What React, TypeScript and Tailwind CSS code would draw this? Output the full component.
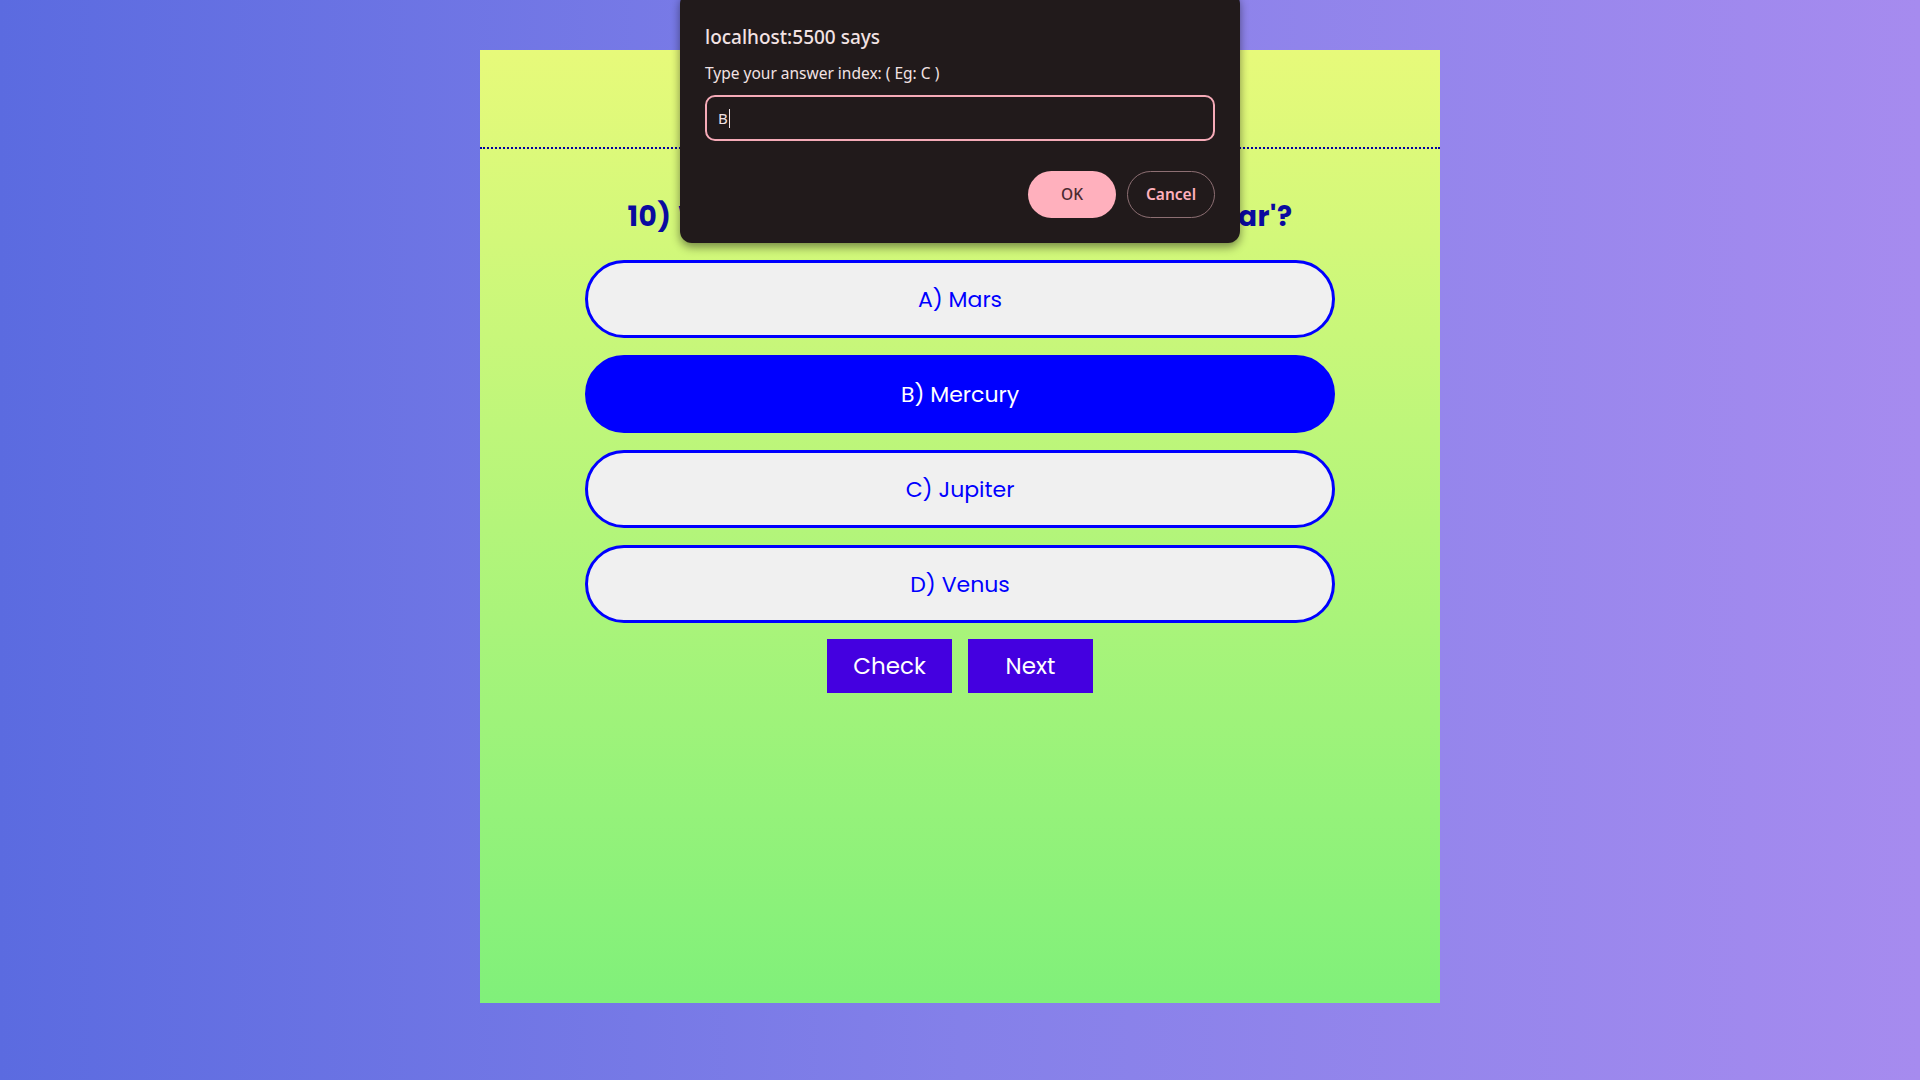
import { useState } from 'react';

const OPTIONS = [
  { key: 'A', label: 'Mars' },
  { key: 'B', label: 'Mercury' },
  { key: 'C', label: 'Jupiter' },
  { key: 'D', label: 'Venus' },
];

function PromptDialog() {
  return (
    <div className="absolute inset-x-0 top-0 flex justify-center">
      <div className="-mt-[8px] w-[560px] rounded-[12px] bg-[#211a1b] px-[25px] pt-[32px] pb-[25px] shadow-[0_4px_10px_rgba(0,0,0,0.45)] font-['Segoe_UI','Noto_Sans',sans-serif] text-[#f2e2e3]">
        <p className="text-[19px] font-medium leading-[26px]">localhost:5500 says</p>
        <p className="mt-[12px] text-[15.5px] leading-[22px]">Type your answer index: ( Eg: C )</p>
        <div className="mt-[11px] flex h-[46px] items-center rounded-[10px] border-[2.5px] border-[#f5aab7] px-[11px]">
          <span className="text-[15px]">B</span>
          <span className="ml-[1px] h-[19px] w-px bg-[#f2e2e3]" />
        </div>
        <div className="mt-[30px] flex justify-end gap-[11px]">
          <button className="h-[47px] w-[88px] rounded-full bg-[#ffb0bd] text-[15.5px] font-medium text-[#4b2a31]">
            OK
          </button>
          <button className="h-[47px] w-[88px] rounded-full border border-[#8d6f73] text-[15.5px] font-semibold text-[#ffb0bd]">
            Cancel
          </button>
        </div>
      </div>
    </div>
  );
}

export default function App() {
  const [selected, setSelected] = useState('B');

  return (
    <div className="relative min-h-screen bg-[linear-gradient(to_right,#5b6be0,#8480e9,#a68bef)] pt-[50px] pb-[77px] font-['Poppins','Inter',sans-serif]">
      <div className="mx-auto flex h-[953px] w-[960px] flex-col items-center bg-[linear-gradient(to_bottom,#e7fa7a,#80f07a)]">
        {/* Header */}
        <div className="flex h-[99px] w-full items-center justify-center border-b-2 border-dotted border-[#0000a0]">
          <h1 className="text-[30px] font-bold text-[#0a0aa0]">Quiz App</h1>
        </div>

        {/* Question */}
        <h2 className="mt-[47px] text-[28px] font-bold leading-[42px] tracking-[0.6px] text-[#0a0aa0]">
          10) Which planet is called the 'Morning Star'?
        </h2>

        {/* Options */}
        <div className="mt-[22px] flex w-[750px] flex-col gap-[17px]">
          {OPTIONS.map(o => (
            <button
              key={o.key}
              onClick={() => setSelected(o.key)}
              className={`h-[78px] w-full rounded-full border-[3px] border-[#0000ff] text-[22px] ${
                selected === o.key ? 'bg-[#0000ff] text-white' : 'bg-[#f0f0f0] text-[#0000ff]'
              }`}
            >
              {o.key}) {o.label}
            </button>
          ))}
        </div>

        {/* Actions */}
        <div className="mt-[16px] flex gap-[16px]">
          <button className="h-[54px] w-[125px] bg-[#4400e0] text-[23px] text-white">Check</button>
          <button className="h-[54px] w-[125px] bg-[#4400e0] text-[23px] text-white">Next</button>
        </div>
      </div>

      <PromptDialog />
    </div>
  );
}
